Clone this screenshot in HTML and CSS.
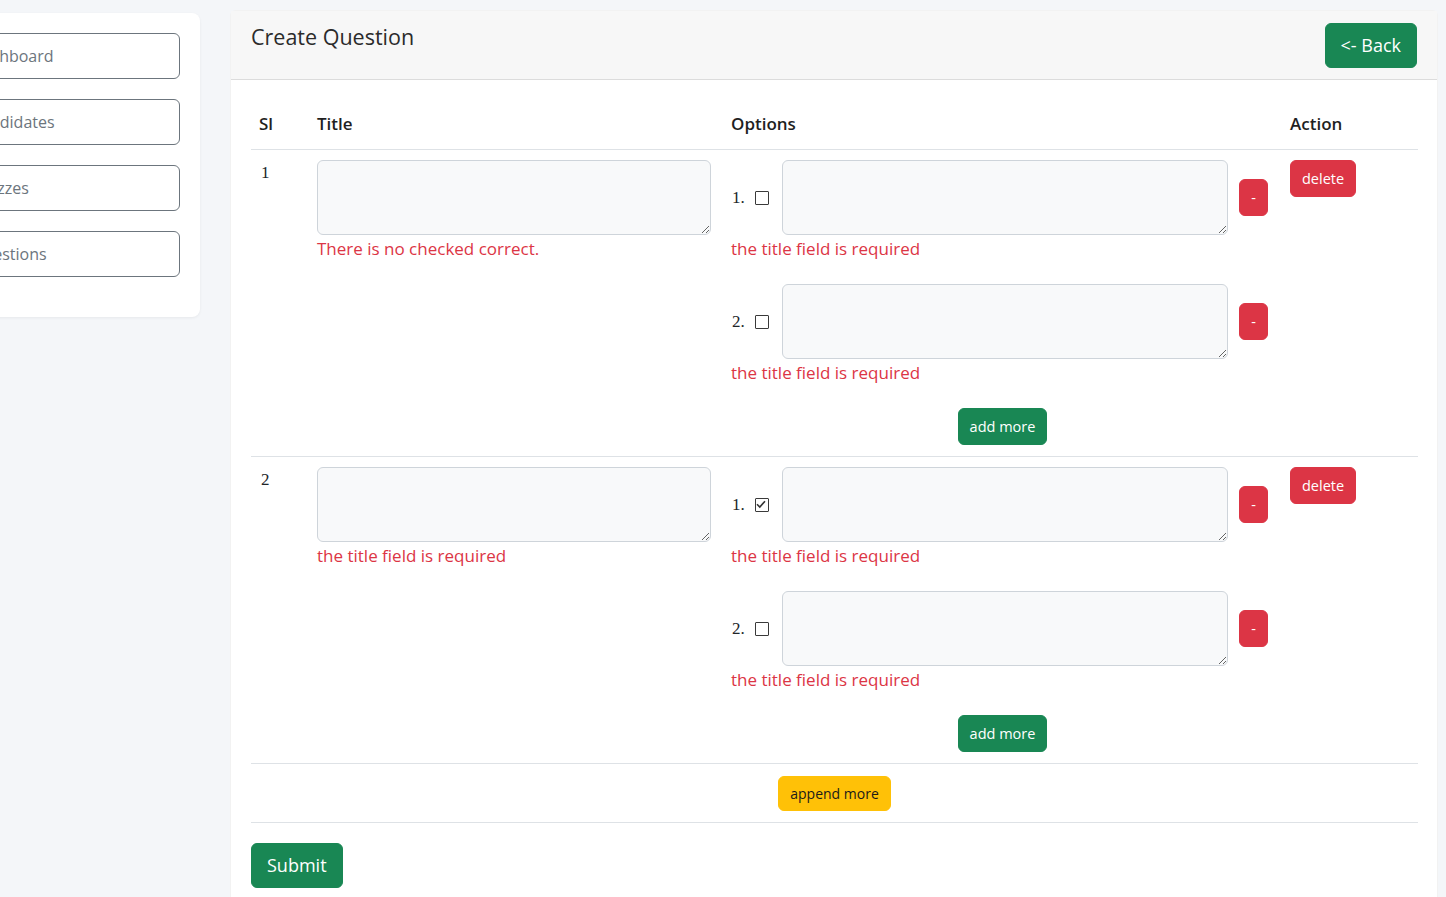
FILE: index.html
```html
<!DOCTYPE html>
<html>
<head>
<meta charset="utf-8">
<link rel="stylesheet" href="styles.css">
</head>
<body>
<div class="layout">
  <aside class="sidebar">
    <a class="nav-btn">Dashboard</a>
    <a class="nav-btn">Candidates</a>
    <a class="nav-btn">Quizzes</a>
    <a class="nav-btn">Questions</a>
  </aside>
  <main class="card">
    <div class="card-header">
      <h1 class="card-title">Create Question</h1>
      <button class="btn btn-lg btn-green">&lt;- Back</button>
    </div>
    <div class="card-body">
      <table class="qtable">
        <colgroup>
          <col class="c-sl"><col class="c-title"><col class="c-opt"><col class="c-act">
        </colgroup>
        <thead>
          <tr><th>Sl</th><th>Title</th><th>Options</th><th>Action</th></tr>
        </thead>
        <tbody>
          <tr>
            <td class="num">1</td>
            <td>
              <textarea class="field title-field"></textarea>
              <div class="err">There is no checked correct.</div>
            </td>
            <td>
              <div class="opt">
                <div class="opt-row">
                  <span class="opt-label">1.</span>
                  <span class="chk"></span>
                  <textarea class="field opt-field"></textarea>
                  <button class="btn btn-sm btn-red minus">-</button>
                </div>
                <div class="err">the title field is required</div>
              </div>
              <div class="opt">
                <div class="opt-row">
                  <span class="opt-label">2.</span>
                  <span class="chk"></span>
                  <textarea class="field opt-field"></textarea>
                  <button class="btn btn-sm btn-red minus">-</button>
                </div>
                <div class="err">the title field is required</div>
              </div>
              <div class="center"><button class="btn btn-sm btn-green">add more</button></div>
            </td>
            <td><button class="btn btn-sm btn-red">delete</button></td>
          </tr>
          <tr>
            <td class="num">2</td>
            <td>
              <textarea class="field title-field"></textarea>
              <div class="err">the title field is required</div>
            </td>
            <td>
              <div class="opt">
                <div class="opt-row">
                  <span class="opt-label">1.</span>
                  <span class="chk"><svg viewBox="0 0 14 14" width="14" height="14"><path d="M3 7.2 L5.8 10 L11 4.2" fill="none" stroke="#333" stroke-width="1.6"/></svg></span>
                  <textarea class="field opt-field"></textarea>
                  <button class="btn btn-sm btn-red minus">-</button>
                </div>
                <div class="err">the title field is required</div>
              </div>
              <div class="opt">
                <div class="opt-row">
                  <span class="opt-label">2.</span>
                  <span class="chk"></span>
                  <textarea class="field opt-field"></textarea>
                  <button class="btn btn-sm btn-red minus">-</button>
                </div>
                <div class="err">the title field is required</div>
              </div>
              <div class="center"><button class="btn btn-sm btn-green">add more</button></div>
            </td>
            <td><button class="btn btn-sm btn-red">delete</button></td>
          </tr>
          <tr class="append-row">
            <td colspan="4" class="center"><button class="btn btn-xs btn-yellow">append more</button></td>
          </tr>
        </tbody>
      </table>
      <button class="btn btn-lg btn-green submit">Submit</button>
    </div>
  </main>
</div>
</body>
</html>
```

FILE: styles.css
```css
* { box-sizing: border-box; }
html, body { margin: 0; padding: 0; }
body {
  background: #f4f6f9;
  font-family: "Open Sans", Lato, sans-serif;
  color: #212529;
  font-size: 16px;
  line-height: 24px;
  overflow: hidden;
  height: 897px;
}
.layout {
  display: flex;
  align-items: flex-start;
}
.sidebar {
  flex: 0 0 262px;
  margin-left: -62px;
  margin-top: 13px;
  background: #fff;
  border-radius: 8px;
  box-shadow: 0 1px 3px rgba(0,0,0,0.06);
  padding: 20px;
  display: flex;
  flex-direction: column;
}
.nav-btn {
  display: block;
  height: 46px;
  border: 1px solid #6c757d;
  border-radius: 6px;
  padding: 10px 12px;
  color: #6c757d;
  font-size: 16px;
  line-height: 24px;
  margin-bottom: 20px;
  text-align: left;
  white-space: nowrap;
}
.card {
  margin-left: 30px;
  margin-top: 10px;
  width: 1208px;
  background: #fff;
  border: 1px solid rgba(0,0,0,0.05);
  border-radius: 6px 6px 0 0;
  min-height: 900px;
}
.card-header {
  background: #f7f7f7;
  border-bottom: 1px solid #dcdcdc;
  display: flex;
  justify-content: space-between;
  align-items: flex-start;
  padding: 12px 20px 11px 20px;
}
.card-title {
  margin: 0;
  font-size: 21.5px;
  font-weight: 400;
  line-height: 28px;
  color: #2b2b2b;
}
.card-body {
  padding: 20px 20px;
}
.btn {
  border: 1px solid transparent;
  border-radius: 6px;
  font-family: "Open Sans", Lato, sans-serif;
  color: #fff;
  cursor: pointer;
  display: inline-block;
  white-space: nowrap;
}
.btn-lg {
  font-size: 18px;
  line-height: 27px;
  padding: 8px 15px;
  height: 45px;
}
.btn-sm {
  font-size: 14.5px;
  line-height: 23px;
  padding: 6px 11px;
  height: 37px;
}
.btn-xs {
  font-size: 14px;
  line-height: 21px;
  padding: 6px 11px;
  height: 35px;
}
.btn-green { background: #198754; border-color: #198754; }
.btn-red { background: #dc3545; border-color: #dc3545; }
.btn-yellow { background: #ffc107; border-color: #ffc107; color: #1a1a1a; }
.minus { width: 29px; padding: 6px 0; margin-left: 11px; flex: 0 0 auto; }

.qtable {
  width: 100%;
  border-collapse: collapse;
  table-layout: fixed;
}
.c-sl { width: 58px; }
.c-title { width: 414px; }
.c-opt { width: 559px; }
.c-act { width: 136px; }
.qtable th {
  text-align: left;
  font-weight: 600;
  font-size: 17px;
  line-height: 24px;
  padding: 12px 8px 13px;
  border-bottom: 1px solid #dee2e6;
  color: #1f1f1f;
}
.qtable td {
  vertical-align: top;
  padding: 10px 8px 11px;
  border-bottom: 1px solid #dee2e6;
}
.num {
  font-family: "Liberation Serif", serif;
  font-size: 17px;
  line-height: 26px;
  padding-left: 10px !important;
}
.field {
  display: block;
  background: #f8f9fa;
  border: 1px solid #ced4da;
  border-radius: 6px;
  height: 75px;
  resize: vertical;
  font-family: inherit;
  margin: 0;
}
.title-field { width: 394px; }
.err {
  color: #dc3545;
  font-size: 17px;
  line-height: 24px;
  margin-top: 2px;
}
.opt { margin-bottom: 23px; }
.opt-row {
  display: flex;
  align-items: center;
  padding-right: 6px;
}
.opt-label {
  font-family: "Liberation Serif", serif;
  font-size: 17px;
  padding-left: 1px;
}
.chk {
  display: block;
  flex: 0 0 auto;
  width: 14px;
  height: 14px;
  border: 1.5px solid #3a3a3a;
  border-radius: 1px;
  background: #fff;
  margin: 0 13px 0 10px;
  position: relative;
}
.chk svg {
  position: absolute;
  left: -1.5px;
  top: -1.5px;
}
.opt-field { flex: 1 1 auto; }
.center { text-align: center; }
.append-row td { padding: 12px 8px 11px; }
.submit { margin-top: 20px; }
```
